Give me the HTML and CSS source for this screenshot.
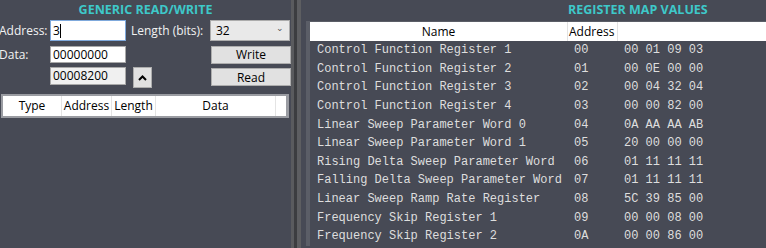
FILE: index.html
```html
<!DOCTYPE html>
<html lang="en">
<head>
  <meta charset="UTF-8">
  <title>Register Map</title>
  <link rel="stylesheet" href="styles.css">
</head>
<body>
  <div class="app">
    <section class="rw-panel">
      <h2 class="panel-title">GENERIC READ/WRITE</h2>

      <div class="rw-row row-address">
        <label class="rw-label">Address:</label>
        <div class="rw-input focused">3<span class="caret"></span></div>
        <label class="rw-label len-label">Length (bits):</label>
        <div class="rw-select">32 <span class="chev">&#8964;</span></div>
      </div>

      <div class="rw-row row-data">
        <label class="rw-label">Data:</label>
        <div class="rw-input">00000000</div>
        <span class="spacer"></span>
        <button class="rw-btn">Write</button>
      </div>

      <div class="rw-row row-read">
        <span class="rw-label"></span>
        <div class="rw-input readonly">00008200</div>
        <button class="up-btn">
          <svg width="9" height="6" viewBox="0 0 9 6"><path d="M1 5 L4.5 1.5 L8 5" fill="none" stroke="#000" stroke-width="2"/></svg>
        </button>
        <span class="spacer"></span>
        <button class="rw-btn">Read</button>
      </div>

      <div class="log-table">
        <div class="log-head">
          <span class="c-type">Type</span>
          <span class="c-addr">Address</span>
          <span class="c-len">Length</span>
          <span class="c-data">Data</span>
          <span class="c-end"></span>
        </div>
      </div>
    </section>

    <div class="splitter"></div>

    <section class="map-panel">
      <h2 class="panel-title map-title">REGISTER MAP VALUES</h2>
      <div class="map-table">
        <div class="map-head">
          <span class="h-name">Name</span>
          <span class="h-addr">Address</span>
          <span class="h-val"></span>
        </div>
        <div id="mapRows"></div>
      </div>
    </section>
  </div>

  <script>
    const registers = [
      ["Control Function Register 1", "00", "00 01 09 03"],
      ["Control Function Register 2", "01", "00 0E 00 00"],
      ["Control Function Register 3", "02", "00 04 32 04"],
      ["Control Function Register 4", "03", "00 00 82 00"],
      ["Linear Sweep Parameter Word 0", "04", "0A AA AA AB"],
      ["Linear Sweep Parameter Word 1", "05", "20 00 00 00"],
      ["Rising Delta Sweep Parameter Word", "06", "01 11 11 11"],
      ["Falling Delta Sweep Parameter Word", "07", "01 11 11 11"],
      ["Linear Sweep Ramp Rate Register", "08", "5C 39 85 00"],
      ["Frequency Skip Register 1", "09", "00 00 08 00"],
      ["Frequency Skip Register 2", "0A", "00 00 86 00"]
    ];

    const rows = document.getElementById("mapRows");
    registers.forEach(function (r) {
      const row = document.createElement("div");
      row.className = "map-row";
      row.innerHTML = '<span class="r-name">' + r[0] + '</span>' +
                      '<span class="r-addr">' + r[1] + '</span>' +
                      '<span class="r-val">' + r[2] + '</span>';
      rows.appendChild(row);
    });
  </script>
</body>
</html>
```

FILE: styles.css
```css
body {
  margin: 0;
  background-color: #474a55;
  font-family: "Open Sans", Arial, sans-serif;
  font-size: 12px;
  color: #f2f2f2;
  overflow: hidden;
}

.app {
  display: flex;
  height: 248px;
}

.panel-title {
  margin: 0;
  height: 20px;
  line-height: 19px;
  font-size: 12.5px;
  font-weight: bold;
  color: #3ec8c9;
  text-align: center;
}

/* left side */
.rw-panel {
  width: 291px;
  flex: none;
}

.rw-row {
  display: flex;
  align-items: center;
  margin-left: -1px;
}

.row-address {
  height: 21px;
}

.row-data {
  height: 17px;
  margin-top: 5px;
}

.row-read {
  height: 21px;
  margin-top: 4px;
}

.rw-label {
  width: 51px;
  flex: none;
}

.len-label {
  width: 79px;
  padding-left: 5px;
}

.rw-input {
  width: 76px;
  height: 100%;
  box-sizing: border-box;
  border: 1px solid #a9a9a9;
  background-color: #ffffff;
  color: #000;
  padding-left: 2px;
  line-height: 16px;
  display: flex;
  align-items: center;
}

.row-read .rw-input {
  height: 18px;
  align-self: flex-start;
}

.rw-input.focused {
  border-color: #7fa9dc;
}

.rw-input.readonly {
  background-color: #f0f0f0;
}

.caret {
  display: inline-block;
  width: 1px;
  height: 14px;
  background-color: #000;
}

.rw-select {
  width: 80px;
  height: 100%;
  box-sizing: border-box;
  border: 1px solid #acacac;
  background-color: #e9e9e9;
  color: #000;
  padding-left: 5px;
  display: flex;
  align-items: center;
  justify-content: space-between;
}

.chev {
  font-size: 9px;
  color: #555;
  padding-right: 5px;
  margin-top: -6px;
}

.spacer {
  flex: 1;
}

.rw-btn {
  width: 80px;
  height: 18px;
  box-sizing: border-box;
  border: 1px solid #adadad;
  background-color: #e1e1e1;
  font-family: inherit;
  font-size: 12px;
  color: #000;
  padding: 0;
  line-height: 15px;
}

.row-read .rw-btn {
  align-self: flex-end;
  margin-bottom: 2px;
}

.up-btn {
  width: 19px;
  height: 21px;
  margin-left: 7px;
  box-sizing: border-box;
  border: 1px solid #adadad;
  background-color: #e1e1e1;
  padding: 0;
  display: flex;
  align-items: center;
  justify-content: center;
}

.log-table {
  margin: 6px 2px 0 1px;
  border: 2px solid #9a9ca2;
  border-right-width: 3px;
  background-color: #ffffff;
}

.log-head {
  display: flex;
  height: 20px;
  line-height: 19px;
  color: #000;
  font-size: 12px;
}

.log-head span {
  text-align: center;
  border-right: 1px solid #e4e4e4;
  box-sizing: border-box;
}

.c-type { width: 59px; }
.c-addr { width: 50px; }
.c-len { width: 44px; }
.c-data { width: 120px; }
.c-end { flex: 1; border-right: none !important; }

/* splitter between panels */
.splitter {
  width: 10px;
  flex: none;
  background: linear-gradient(to right,
    #5a5b5e 0, #5a5b5e 3px,
    #3c3d40 3px, #3c3d40 6px,
    #5d5e61 6px, #5d5e61 10px);
}

/* right side */
.map-panel {
  flex: 1;
  min-width: 0;
}

.map-title {
  text-align: left;
  padding-left: 267px;
}

.map-table {
  margin-left: 5px;
  margin-top: 1px;
  border-left: 4px solid #5b5e67;
  border-top: 1px solid #5b5e67;
}

.map-head {
  display: flex;
  height: 19px;
  line-height: 19px;
  background-color: #ffffff;
  color: #000;
}

.map-head span {
  box-sizing: border-box;
  border-right: 1px solid #e2e2e2;
}

.h-name { width: 258px; text-align: center; }
.h-addr { width: 50px; padding-left: 1px; }
.h-val { flex: 1; border-right: none !important; }

.map-row {
  display: flex;
  height: 18.63px;
  line-height: 18.63px;
  font-family: "Liberation Mono", "Courier New", monospace;
  font-size: 12px;
  color: #dedede;
  white-space: pre;
}

.r-name { width: 258px; padding-left: 7px; box-sizing: border-box; }
.r-addr { width: 50px; padding-left: 6px; box-sizing: border-box; }
.r-val { padding-left: 6px; }
```
